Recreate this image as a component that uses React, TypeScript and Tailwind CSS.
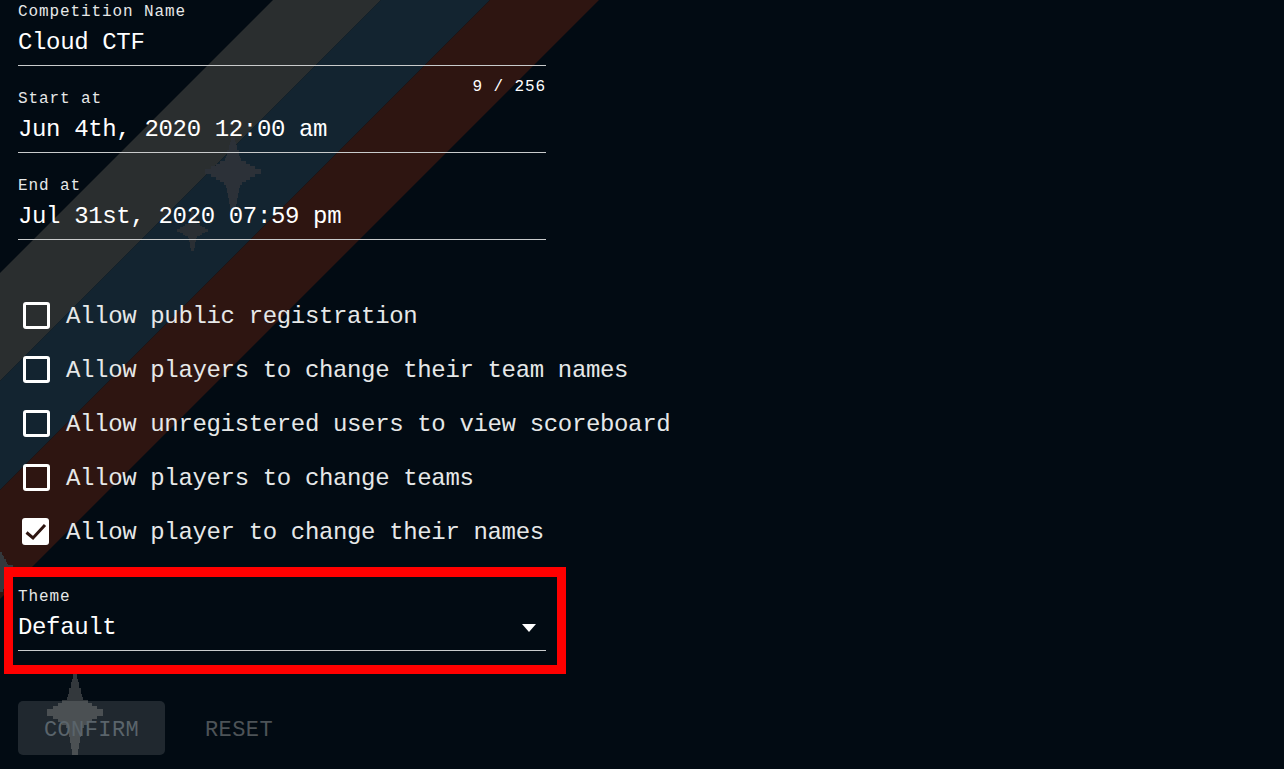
const mono = "font-['Liberation_Mono',monospace]";

// half widths of the star per pixel row (one row = 3 screen px on the big one)
const starRows = [2, 2, 3, 4, 4, 6, 6, 7, 8, 13, 17, 22, 28, 28, 22, 17, 13, 9, 7, 6, 6, 5, 5, 4, 4, 3, 3];

function Star({ className }: { className: string }) {
  return (
    <svg className={className} viewBox="0 0 56 27" preserveAspectRatio="none" shapeRendering="crispEdges" fill="currentColor">
      {starRows.map((r, i) => (
        <rect key={i} x={28 - r} y={i} width={r * 2} height={1} />
      ))}
    </svg>
  );
}

function Field({ label, value, height, children }: { label: string; value: string; height: string; children?: React.ReactNode }) {
  return (
    <div className={`flex flex-col justify-end border-b border-[#c9cbcc] pb-[9px] ${height}`}>
      <div className="text-[16px] leading-[20px] tracking-[0.9px] text-[#e6e8e8]">{label}</div>
      <div className="mt-[8px] flex items-center justify-between pr-[10px] text-[24px] leading-[26px] tracking-[-0.35px] text-white">
        {value}
        {children}
      </div>
    </div>
  );
}

function Check({ label, checked }: { label: string; checked?: boolean }) {
  return (
    <div className="flex h-[54px] items-center whitespace-nowrap pl-[5px]">
      {checked ? (
        <div className="-ml-px mr-px h-[27px] w-[27px] shrink-0 rounded-[3px] bg-white">
          <svg width="27" height="27" viewBox="0 0 27 27" fill="none" stroke="#2e1511" strokeWidth="3">
            <path d="M4.5 14.5L11 20L23 7" />
          </svg>
        </div>
      ) : (
        <div className="h-[27px] w-[27px] shrink-0 rounded-[3px] border-[3px] border-white" />
      )}
      <span className="ml-[16px] mt-[4px] text-[24px] leading-[26px] tracking-[-0.35px] text-[#e6e8e8]">{label}</span>
    </div>
  );
}

export default function App() {
  return (
    <div className={`relative h-[769px] w-full overflow-hidden bg-[#020b13] ${mono}`}>
      {/* background stripes and stars */}
      <svg className="absolute inset-0 h-full w-full" viewBox="0 0 1284 769">
        <polygon points="273,0 381,0 0,381 0,273" fill="#2a2e2f" />
        <polygon points="381,0 490,0 0,490 0,381" fill="#132430" />
        <polygon points="490,0 599,0 0,599 0,490" fill="#2e1511" />
      </svg>
      <Star className="absolute left-[205px] top-[137px] h-[72px] w-[56px] text-[#2c3138]" />
      <Star className="absolute left-[177px] top-[211px] h-[40px] w-[31px] text-[#2a2f34]" />
      <Star className="absolute left-[47px] top-[673px] h-[82px] w-[56px] text-[#33383c]" />
      <Star className="absolute left-[-28px] top-[552px] h-[40px] w-[56px] text-[#33383c]" />

      <div className="relative">
        <div className="ml-[18px] w-[528px]">
          <Field label="Competition Name" value="Cloud CTF" height="h-[66px]" />
          <div className="flex h-0 justify-end">
            <span className="mt-[11px] h-[20px] text-[16px] leading-[20px] tracking-[0.9px] text-white">9 / 256</span>
          </div>
          <Field label="Start at" value="Jun 4th, 2020 12:00 am" height="h-[87px]" />
          <Field label="End at" value="Jul 31st, 2020 07:59 pm" height="h-[87px]" />
          <div className="mt-[48px]">
            <Check label="Allow public registration" />
            <Check label="Allow players to change their team names" />
            <Check label="Allow unregistered users to view scoreboard" />
            <Check label="Allow players to change teams" />
            <Check label="Allow player to change their names" checked />
          </div>
        </div>

        {/* red highlight around the theme select */}
        <div className="ml-[4px] mt-[9px] h-[107px] w-[562px] border-[9px] border-t-[10px] border-[#ff0000] bg-[#020b13] pl-[5px]">
          <div className="w-[528px]">
            <Field label="Theme" value="Default" height="h-[74px]">
              <div className="h-0 w-0 border-x-[7.5px] border-t-[8px] border-x-transparent border-t-white" />
            </Field>
          </div>
        </div>

        <div className="ml-[18px] mt-[27px] flex items-center">
          <div className="flex h-[54px] w-[147px] items-center justify-center rounded-[5px] bg-white/12 pt-[4px] text-[22px] tracking-[0.4px] text-[#5a646b]">CONFIRM</div>
          <div className="ml-[40px] pt-[4px] text-[22px] tracking-[0.4px] text-[#4d5357]">RESET</div>
        </div>
      </div>
    </div>
  );
}
